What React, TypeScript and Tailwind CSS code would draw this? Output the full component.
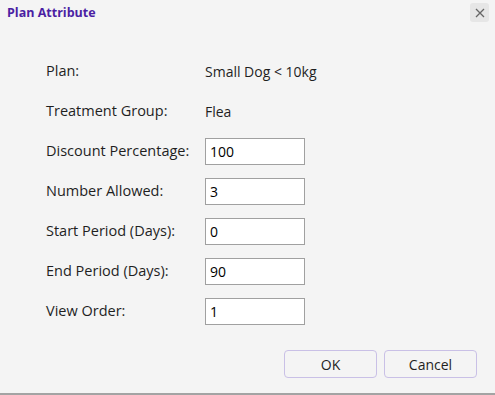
import React from "react";

const rows: { label: string; value: string; input?: boolean }[] = [
  { label: "Plan:", value: "Small Dog < 10kg" },
  { label: "Treatment Group:", value: "Flea" },
  { label: "Discount Percentage:", value: "100", input: true },
  { label: "Number Allowed:", value: "3", input: true },
  { label: "Start Period (Days):", value: "0", input: true },
  { label: "End Period (Days):", value: "90", input: true },
  { label: "View Order:", value: "1", input: true },
];

export default function App() {
  return (
    <div
      className="w-[495px] h-[395px] bg-[#f4f4f4] border-b-2 border-[#a3a3a3] flex flex-col text-[#1f1f1f]"
      style={{ fontFamily: "'Open Sans', Lato, sans-serif" }}
    >
      <div className="flex items-start justify-between pl-[7px] pr-[6px] pt-[3px] h-[51px]">
        <h1 className="text-[12.5px] font-bold text-[#4b1fa3] mt-[2px] leading-[16px]">
          Plan Attribute
        </h1>
        <button className="w-[19px] h-[19px] rounded-[3px] bg-[#e6e6e6] flex items-center justify-center text-[#666]">
          <svg width="10" height="10" viewBox="0 0 10 10" fill="none">
            <path d="M1 1L9 9M9 1L1 9" stroke="currentColor" strokeWidth="1.3" />
          </svg>
        </button>
      </div>

      <div className="pl-[46px] grid grid-cols-[159px_1fr]">
        {rows.map((r) => (
          <React.Fragment key={r.label}>
            <div className="h-[40px] flex items-center text-[14.5px]">{r.label}</div>
            <div className="h-[40px] flex items-center text-[14px]">
              {r.input ? (
                <input
                  defaultValue={r.value}
                  className="w-[100px] h-[27px] bg-white border border-[#a0a0a0] px-[4px] text-[14px] text-black outline-none"
                />
              ) : (
                <span>{r.value}</span>
              )}
            </div>
          </React.Fragment>
        ))}
      </div>

      <div className="flex justify-end gap-[7px] pr-[18px] mt-[19px] text-[14px]">
        <button className="w-[93px] h-[28px] rounded-[4px] border border-[#c9c0e6] bg-[#f4f4f4]">
          OK
        </button>
        <button className="w-[93px] h-[28px] rounded-[4px] border border-[#c9c0e6] bg-[#f4f4f4]">
          Cancel
        </button>
      </div>
    </div>
  );
}
